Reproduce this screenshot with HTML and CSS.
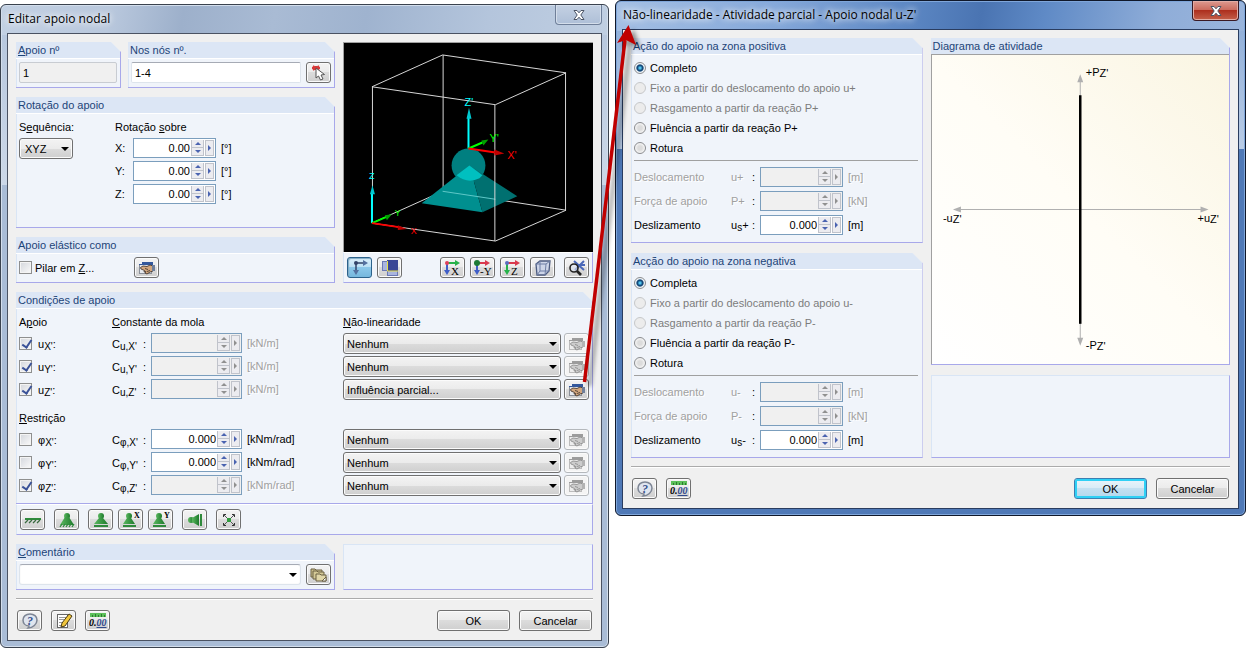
FILE: index.html
```
<!DOCTYPE html>
<html lang="pt">
<head>
  <meta charset="UTF-8" />
  <meta name="viewport" content="width=device-width, initial-scale=1.0"/>
  <title>Editar apoio nodal</title>
  <link rel="stylesheet" href="styles.css">
</head>
<body>
  <!-- Icon set -->
  <svg class="defs" width="0" height="0">
    <defs>
      <linearGradient id="green" x1="0" x2="1"><stop offset="0" stop-color="#5cb860"/><stop offset="1" stop-color="#1d7a2b"/></linearGradient>
      <symbol id="i-edit" viewBox="0 0 18 16">
        <rect x="1.500" y="2.500" width="12" height="11" fill="#e6e9ee" stroke="#8a8f98"/>
        <rect x="1" y="2" width="14" height="3" fill="#34589c"/>
        <rect x="1" y="2" width="3" height="2" fill="#f0f2f6"/>
        <path d="M2.500 7.500L5 6l4 .5L12 5l3 1v5l-3 1-3 2-2-1 1-1.500-2 .5.500-1.500L3 9z" fill="#d3a77e" stroke="#4a3a30" stroke-width=".9"/>
        <path d="M7 8.500l3 1M9 11.500l3-1" stroke="#4a3a30" stroke-width=".9"/>
        <path d="M14 5h3v6h-3z" fill="#6f7f9a"/>
      </symbol>
      <symbol id="i-pick" viewBox="0 0 18 16">
        <path d="M2 3h8M3 1l6 4M9 1L3 5M6 1v4" stroke="#d83a3a" stroke-width="1.800"/>
        <path d="M6 3v10l2.500-2 2 4 2.500-1-2-4 3.500-.5z" fill="#fff" stroke="#555"/>
      </symbol>
      <symbol id="i-axes" viewBox="0 0 18 16">
        <path d="M5 3h9M5 3v9" stroke="#33446a" stroke-width="1.500" fill="none"/>
        <path d="M12 0l5 3-5 3zM2 10l3 5 3-5z" fill="#54709f"/><circle cx="5" cy="3" r="2" fill="#33446a"/>
      </symbol>
      <symbol id="i-layers" viewBox="0 0 18 16">
        <rect x="1.500" y="1.500" width="9" height="9" fill="#a9b5df" stroke="#6b79b5"/>
        <rect x="6.500" y="10.500" width="10" height="5" fill="#a9b5df" stroke="#6b79b5"/>
        <rect x="6" y="0" width="11" height="11" fill="#3a4796"/>
        <path d="M6.500 1v10H17" stroke="#e6e04a" fill="none"/>
      </symbol>
      <symbol id="i-view-x" viewBox="0 0 18 16">
        <path d="M3 3h10" stroke="#27b24a" stroke-width="2"/><path d="M11 0l5 3-5 3z" fill="#27b24a"/>
        <path d="M3 3v9" stroke="#3f5ec8" stroke-width="2"/><path d="M0 10l3 5 3-5z" fill="#3f5ec8"/>
        <circle cx="3" cy="3" r="2" fill="#e0405a"/>
        <text class="icon-letter" x="7" y="15">X</text>
      </symbol>
      <symbol id="i-view-y" viewBox="0 0 18 16">
        <path d="M3 3h10" stroke="#d93a4e" stroke-width="2"/><path d="M11 0l5 3-5 3z" fill="#d93a4e"/>
        <path d="M3 3v9" stroke="#3f5ec8" stroke-width="2"/><path d="M0 10l3 5 3-5z" fill="#3f5ec8"/>
        <circle cx="3" cy="3" r="3" fill="#1c7a34"/>
        <text class="icon-letter" x="6" y="15">-Y</text>
      </symbol>
      <symbol id="i-view-z" viewBox="0 0 18 16">
        <path d="M3 3h10" stroke="#d93a4e" stroke-width="2"/><path d="M11 0l5 3-5 3z" fill="#d93a4e"/>
        <path d="M3 3v9" stroke="#27b24a" stroke-width="2"/><path d="M0 10l3 5 3-5z" fill="#27b24a"/>
        <circle cx="3" cy="3" r="2" fill="#5a6cc0"/>
        <text class="icon-letter" x="7" y="15">Z</text>
      </symbol>
      <symbol id="i-cube" viewBox="0 0 18 16">
        <path d="M2 4l4-3h10l-1 10-4 4H3z" fill="#cdd5e8" stroke="#4c5b80" stroke-width="1.300"/>
        <path d="M2 4h10l-1 11M12 4l4-3M6 1v10h9M6 11l-3 4" fill="none" stroke="#6f7fa6"/>
      </symbol>
      <symbol id="i-zoom" viewBox="0 0 18 16">
        <path d="M6 1l10 9M16 1L7 10M8 5h9" stroke="#4a68b8" stroke-width="2"/>
        <circle cx="6" cy="8" r="4" fill="#dfe6f2" fill-opacity=".6" stroke="#222" stroke-width="1.600"/>
        <path d="M9 11l4 4" stroke="#222" stroke-width="2.600"/>
      </symbol>
      <symbol id="i-fixed" viewBox="0 0 18 16">
        <rect x="1" y="6" width="16" height="2" fill="#2f8a3c"/>
        <path d="M1 11l3-3M5 11l3-3M9 11l3-3M13 11l3-3" stroke="#3a6b40" stroke-width="1.300"/>
      </symbol>
      <symbol id="i-hinge" viewBox="0 0 18 16">
        <circle cx="9" cy="4" r="3" fill="url(#green)"/><path d="M7 5h4l5 8H2z" fill="url(#green)"/>
        <path d="M2 15l2-3M5 15l2-3M8 15l2-3M11 15l2-3M14 15l2-3" stroke="#2f8a3c" stroke-width="1.300"/>
      </symbol>
      <symbol id="i-slide" viewBox="0 0 18 16">
        <circle cx="9" cy="4" r="3" fill="url(#green)"/><path d="M7 6h4l5 6H2z" fill="url(#green)"/>
        <rect x="2" y="13" width="14" height="2" fill="#2f8a3c"/>
      </symbol>
      <symbol id="i-slide-x" viewBox="0 0 18 16">
        <circle cx="7" cy="4" r="3" fill="url(#green)"/><path d="M5 6h4l4 6H1z" fill="url(#green)"/>
        <rect x="1" y="13" width="13" height="2" fill="#2f8a3c"/>
        <text class="icon-tag" x="12" y="6">X</text>
      </symbol>
      <symbol id="i-slide-y" viewBox="0 0 18 16">
        <circle cx="7" cy="4" r="3" fill="url(#green)"/><path d="M5 6h4l4 6H1z" fill="url(#green)"/>
        <rect x="1" y="13" width="13" height="2" fill="#2f8a3c"/>
        <text class="icon-tag" x="12" y="6">Y</text>
      </symbol>
      <symbol id="i-side" viewBox="0 0 18 16">
        <circle cx="5" cy="8" r="3" fill="url(#green)"/><path d="M6 6l7-4v12l-7-4z" fill="url(#green)"/>
        <rect x="14" y="2" width="2" height="12" fill="#2f8a3c"/>
      </symbol>
      <symbol id="i-free" viewBox="0 0 18 16">
        <path d="M4 3l10 10M14 3L4 13" stroke="#555"/>
        <path d="M3.500 5V2.500H6M12 2.500h2.500V5M14.500 11v2.500H12M6 13.500H3.500V11" fill="none" stroke="#333"/>
        <rect x="7" y="6" width="4" height="4" fill="#2f9a3c"/>
      </symbol>
      <symbol id="i-folders" viewBox="0 0 18 16">
        <path d="M1 2h4l1 1h6v7H1z" fill="#c9bd8b" stroke="#6b6142"/>
        <path d="M3 4h4l1 1h6v7H3z" fill="#d4c996" stroke="#6b6142"/>
        <path d="M6 7h4l1 1h5v6H6z" fill="#e0d6a8" stroke="#6b6142"/>
        <path d="M12 14l4-4v4z" fill="#fff" stroke="#6b6142"/>
      </symbol>
      <symbol id="i-help" viewBox="0 0 18 16">
        <path d="M9 1c4 0 7 2.500 7 6 0 4-4 8-9 8 1-1 1-2 1-2-4 0-6-3-6-6 0-3.500 3-6 7-6z" fill="#dfe5ef" stroke="#7d8594" stroke-width="1.500"/>
        <text class="icon-help" x="6" y="12">?</text>
      </symbol>
      <symbol id="i-note" viewBox="0 0 18 16">
        <rect x="2.500" y="1.500" width="10" height="13" fill="#fff" stroke="#666"/>
        <path d="M4 4.500h7M4 6.500h5M4 9.500h4M4 12.500h6" stroke="#999"/>
        <path d="M14 1l3 2-7 10-4 1 1-4z" fill="#f0c63c" stroke="#4a3a10"/>
      </symbol>
      <symbol id="i-units" viewBox="0 0 18 16">
        <rect x="1" y="0" width="16" height="4" fill="#5cc05a"/>
        <path d="M3.500 2v2M6.500 1v3M9.500 2v2M12.500 1v3M15.500 2v2" stroke="#2d7a2f"/>
        <text class="icon-num" x="0" y="13">0.<tspan fill="#2f4a8c" text-decoration="underline">00</tspan></text>
      </symbol>
      <symbol id="i-close" viewBox="0 0 14 12">
        <path d="M2 1.500h3l2 2.300 2-2.300h3L8.800 6l3.200 4.500H9L7 8.200 5 10.500H2L5.200 6z" fill="#fff" stroke="#4c5566"/>
      </symbol>
    </defs>
  </svg>

  <div class="desktop">
    <!-- Nodal support window -->
    <section class="window window-support">
      <header class="title-bar">
        <h1>Editar apoio nodal</h1>
        <button class="close-btn" aria-label="Fechar"><svg><use href="#i-close"/></svg></button>
      </header>
      <div class="client">
        <div class="top-grid">
          <div class="column">
            <div class="ids">
              <div class="panel">
                <h2><label for="supportNo"><u>A</u>poio nº</label></h2>
                <div class="panel-body"><input class="text-box" id="supportNo" type="text" value="1" readonly></div>
              </div>
              <div class="panel">
                <h2><label for="nodes">Nos nós nº.</label></h2>
                <div class="panel-body bar">
                  <input class="text-box" id="nodes" type="text" value="1-4">
                  <button class="icon-btn" aria-label="Selecionar"><svg><use href="#i-pick"/></svg></button>
                </div>
              </div>
            </div>

            <div class="panel">
              <h2>Rotação do apoio</h2>
              <div class="panel-body rotation">
                <div class="stack">
                  <label for="sequence">S<u>e</u>quência:</label>
                  <div class="combo combo-seq"><select id="sequence"><option>XYZ</option></select></div>
                </div>
                <div class="stack">
                  <p>Rotação <u>s</u>obre</p>
                  <div class="rot-rows">
                    <div class="rot-row"><label for="rx">X:</label>
                      <div class="spin"><input id="rx" type="text" value="0.00"><span class="steps"><button class="up"></button><button class="down"></button></span><button class="more"></button></div>
                      <span class="unit">[°]</span></div>
                    <div class="rot-row"><label for="ry">Y:</label>
                      <div class="spin"><input id="ry" type="text" value="0.00"><span class="steps"><button class="up"></button><button class="down"></button></span><button class="more"></button></div>
                      <span class="unit">[°]</span></div>
                    <div class="rot-row"><label for="rz">Z:</label>
                      <div class="spin"><input id="rz" type="text" value="0.00"><span class="steps"><button class="up"></button><button class="down"></button></span><button class="more"></button></div>
                      <span class="unit">[°]</span></div>
                  </div>
                </div>
              </div>
            </div>

            <div class="panel">
              <h2>Apoio elástico como</h2>
              <div class="panel-body elastic">
                <label class="check"><input type="checkbox"><span>Pilar em <u>Z</u>...</span></label>
                <button class="icon-btn" aria-label="Editar pilar"><svg><use href="#i-edit"/></svg></button>
              </div>
            </div>
          </div>

          <div class="preview">
            <svg class="viewport" viewBox="0 0 250 210">
              <g fill="none" stroke="#d8d8d8">
                <path d="M99 149L223 168L152 199L28 181Z"/>
                <path d="M99.500 12V149"/>
              </g>
              <circle cx="125" cy="123" r="17" fill="#007f80"/>
              <path d="M126 123L78 161L139 170Z" fill="#008f8f"/>
              <path d="M126 123L139 170L174 154Z" fill="#007070"/>
              <path d="M126 123L113 133Q124 142 136 136L139 133Z" fill="#00c0c0"/>
              <path d="M99 149L152 157" stroke="#5fc8c8"/>
              <g fill="none" stroke="#d8d8d8">
                <path d="M99 12L223 30L152 62L28 44Z"/>
                <path d="M28.500 44V181M222.500 30V168M151.500 62V199"/>
              </g>
              <g stroke-width="2">
                <path d="M125 106V75" stroke="#0ff"/><path d="M125 106L139 100" stroke="#0f0"/><path d="M125 106L152 110" stroke="#f00"/>
                <path d="M28 181V151" stroke="#0ff"/><path d="M28 181L42 175" stroke="#0f0"/><path d="M28 181L55 185" stroke="#f00"/>
              </g>
              <path d="M123 76L125.500 65L128 76ZM26 152L28.500 143L31 152Z" fill="#00c8d0"/>
              <path d="M138 98L145 97L140 103ZM41 173L48 172L43 178Z" fill="#00a000"/>
              <path d="M151 107L161 111L151 113ZM54 183L63 187L54 188Z" fill="#c00000"/>
              <text class="axis" x="121" y="63" fill="#0ff">Z'</text>
              <text class="axis" x="146" y="99" fill="#0f0">Y'</text>
              <text class="axis" x="164" y="117" fill="#f00">X'</text>
              <text class="axis axis-small" x="25" y="137" fill="#0ff">Z</text>
              <text class="axis axis-small" x="51" y="174" fill="#0f0">Y</text>
              <text class="axis axis-small" x="67" y="192" fill="#f00">X</text>
            </svg>
            <div class="view-bar bar">
              <button class="icon-btn pressed" aria-label="Eixos"><svg><use href="#i-axes"/></svg></button>
              <button class="icon-btn" aria-label="Camadas"><svg><use href="#i-layers"/></svg></button>
              <button class="icon-btn push-right" aria-label="Vista X"><svg><use href="#i-view-x"/></svg></button>
              <button class="icon-btn" aria-label="Vista -Y"><svg><use href="#i-view-y"/></svg></button>
              <button class="icon-btn" aria-label="Vista Z"><svg><use href="#i-view-z"/></svg></button>
              <button class="icon-btn" aria-label="Isometria"><svg><use href="#i-cube"/></svg></button>
              <button class="icon-btn spaced" aria-label="Zoom"><svg><use href="#i-zoom"/></svg></button>
            </div>
          </div>
        </div>

        <div class="panel conditions">
          <h2>Condições de apoio</h2>
          <div class="panel-body">
            <div class="cond-head"><span>A<u>p</u>oio</span><span><u>C</u>onstante da mola</span><span class="nonlin"><u>N</u>ão-linearidade</span></div>
            <div class="cond-rows">
              <div class="cond-row">
                <label class="check"><input type="checkbox" checked><span>u<sub>X'</sub>:</span></label>
                <label class="symbol" for="cux"><span>C<sub>u,X'</sub></span>:</label>
                <div class="spin"><input id="cux" type="text" disabled><span class="steps"><button class="up" disabled></button><button class="down" disabled></button></span><button class="more" disabled></button></div>
                <span class="unit off">[kN/m]</span>
                <div class="combo"><select aria-label="Não-linearidade uX"><option>Nenhum</option></select></div>
                <button class="icon-btn" aria-label="Editar" disabled><svg><use href="#i-edit"/></svg></button>
              </div>
              <div class="cond-row">
                <label class="check"><input type="checkbox" checked><span>u<sub>Y'</sub>:</span></label>
                <label class="symbol" for="cuy"><span>C<sub>u,Y'</sub></span>:</label>
                <div class="spin"><input id="cuy" type="text" disabled><span class="steps"><button class="up" disabled></button><button class="down" disabled></button></span><button class="more" disabled></button></div>
                <span class="unit off">[kN/m]</span>
                <div class="combo"><select aria-label="Não-linearidade uY"><option>Nenhum</option></select></div>
                <button class="icon-btn" aria-label="Editar" disabled><svg><use href="#i-edit"/></svg></button>
              </div>
              <div class="cond-row">
                <label class="check"><input type="checkbox" checked><span>u<sub>Z'</sub>:</span></label>
                <label class="symbol" for="cuz"><span>C<sub>u,Z'</sub></span>:</label>
                <div class="spin"><input id="cuz" type="text" disabled><span class="steps"><button class="up" disabled></button><button class="down" disabled></button></span><button class="more" disabled></button></div>
                <span class="unit off">[kN/m]</span>
                <div class="combo"><select aria-label="Não-linearidade uZ"><option>Influência parcial...</option></select></div>
                <button class="icon-btn" aria-label="Editar"><svg><use href="#i-edit"/></svg></button>
              </div>
            </div>
            <div class="cond-head second"><span><u>R</u>estrição</span></div>
            <div class="cond-rows">
              <div class="cond-row">
                <label class="check"><input type="checkbox"><span>φ<sub>X'</sub>:</span></label>
                <label class="symbol" for="cpx"><span>C<sub>φ,X'</sub></span>:</label>
                <div class="spin"><input id="cpx" type="text" value="0.000"><span class="steps"><button class="up"></button><button class="down"></button></span><button class="more"></button></div>
                <span class="unit">[kNm/rad]</span>
                <div class="combo"><select aria-label="Não-linearidade phi X"><option>Nenhum</option></select></div>
                <button class="icon-btn" aria-label="Editar" disabled><svg><use href="#i-edit"/></svg></button>
              </div>
              <div class="cond-row">
                <label class="check"><input type="checkbox"><span>φ<sub>Y'</sub>:</span></label>
                <label class="symbol" for="cpy"><span>C<sub>φ,Y'</sub></span>:</label>
                <div class="spin"><input id="cpy" type="text" value="0.000"><span class="steps"><button class="up"></button><button class="down"></button></span><button class="more"></button></div>
                <span class="unit">[kNm/rad]</span>
                <div class="combo"><select aria-label="Não-linearidade phi Y"><option>Nenhum</option></select></div>
                <button class="icon-btn" aria-label="Editar" disabled><svg><use href="#i-edit"/></svg></button>
              </div>
              <div class="cond-row">
                <label class="check"><input type="checkbox" checked><span>φ<sub>Z'</sub>:</span></label>
                <label class="symbol" for="cpz"><span>C<sub>φ,Z'</sub></span>:</label>
                <div class="spin"><input id="cpz" type="text" disabled><span class="steps"><button class="up" disabled></button><button class="down" disabled></button></span><button class="more" disabled></button></div>
                <span class="unit off">[kNm/rad]</span>
                <div class="combo"><select aria-label="Não-linearidade phi Z"><option>Nenhum</option></select></div>
                <button class="icon-btn" aria-label="Editar" disabled><svg><use href="#i-edit"/></svg></button>
              </div>
            </div>
          </div>
        </div>
        <div class="support-bar bar">
          <button class="icon-btn" aria-label="Encastrado"><svg><use href="#i-fixed"/></svg></button>
          <button class="icon-btn spaced" aria-label="Articulado"><svg><use href="#i-hinge"/></svg></button>
          <button class="icon-btn spaced" aria-label="Deslizante"><svg><use href="#i-slide"/></svg></button>
          <button class="icon-btn" aria-label="Deslizante X"><svg><use href="#i-slide-x"/></svg></button>
          <button class="icon-btn" aria-label="Deslizante Y"><svg><use href="#i-slide-y"/></svg></button>
          <button class="icon-btn spaced" aria-label="Lateral"><svg><use href="#i-side"/></svg></button>
          <button class="icon-btn spaced" aria-label="Livre"><svg><use href="#i-free"/></svg></button>
        </div>

        <div class="comment-grid">
          <div class="panel">
            <h2><label for="comment"><u>C</u>omentário</label></h2>
            <div class="panel-body bar">
              <div class="combo combo-plain"><select id="comment"><option></option></select></div>
              <button class="icon-btn" aria-label="Biblioteca"><svg><use href="#i-folders"/></svg></button>
            </div>
          </div>
          <div class="blank"></div>
        </div>

        <footer class="actions">
          <button class="icon-btn" aria-label="Ajuda"><svg><use href="#i-help"/></svg></button>
          <button class="icon-btn" aria-label="Notas"><svg><use href="#i-note"/></svg></button>
          <button class="icon-btn" aria-label="Unidades"><svg><use href="#i-units"/></svg></button>
          <button class="btn push-right">OK</button>
          <button class="btn">Cancelar</button>
        </footer>
      </div>
    </section>

    <!-- Nonlinearity window -->
    <section class="window window-active">
      <header class="title-bar">
        <h1>Não-linearidade - Atividade parcial - Apoio nodal u-Z'</h1>
        <button class="close-btn" aria-label="Fechar"><svg><use href="#i-close"/></svg></button>
      </header>
      <div class="client">
        <div class="activity-grid">
          <div class="column">
            <div class="panel">
              <h2>Ação do apoio na zona positiva</h2>
              <div class="panel-body">
                <div class="radios">
                  <label class="radio"><input type="radio" name="pos" checked>Completo</label>
                  <label class="radio off"><input type="radio" name="pos" disabled>Fixo a partir do deslocamento do apoio u+</label>
                  <label class="radio off"><input type="radio" name="pos" disabled>Rasgamento a partir da reação P+</label>
                  <label class="radio"><input type="radio" name="pos">Fluência a partir da reação P+</label>
                  <label class="radio"><input type="radio" name="pos">Rotura</label>
                </div>
                <div class="values">
                  <div class="value-row"><label class="off" for="pu">Deslocamento</label><span class="sym off">u+</span><span>:</span>
                    <div class="spin"><input id="pu" type="text" disabled><span class="steps"><button class="up" disabled></button><button class="down" disabled></button></span><button class="more" disabled></button></div>
                    <span class="unit off">[m]</span></div>
                  <div class="value-row"><label class="off" for="pp">Força de apoio</label><span class="sym off">P+</span><span>:</span>
                    <div class="spin"><input id="pp" type="text" disabled><span class="steps"><button class="up" disabled></button><button class="down" disabled></button></span><button class="more" disabled></button></div>
                    <span class="unit off">[kN]</span></div>
                  <div class="value-row"><label for="ps">Deslizamento</label><span class="sym">u<sub>s</sub>+</span><span>:</span>
                    <div class="spin"><input id="ps" type="text" value="0.000"><span class="steps"><button class="up"></button><button class="down"></button></span><button class="more"></button></div>
                    <span class="unit">[m]</span></div>
                </div>
              </div>
            </div>
            <div class="panel">
              <h2>Acção do apoio na zona negativa</h2>
              <div class="panel-body">
                <div class="radios">
                  <label class="radio"><input type="radio" name="neg" checked>Completa</label>
                  <label class="radio off"><input type="radio" name="neg" disabled>Fixo a partir do deslocamento do apoio u-</label>
                  <label class="radio off"><input type="radio" name="neg" disabled>Rasgamento a partir da reação P-</label>
                  <label class="radio"><input type="radio" name="neg">Fluência a partir da reação P-</label>
                  <label class="radio"><input type="radio" name="neg">Rotura</label>
                </div>
                <div class="values">
                  <div class="value-row"><label class="off" for="nu">Deslocamento</label><span class="sym off">u-</span><span>:</span>
                    <div class="spin"><input id="nu" type="text" disabled><span class="steps"><button class="up" disabled></button><button class="down" disabled></button></span><button class="more" disabled></button></div>
                    <span class="unit off">[m]</span></div>
                  <div class="value-row"><label class="off" for="np">Força de apoio</label><span class="sym off">P-</span><span>:</span>
                    <div class="spin"><input id="np" type="text" disabled><span class="steps"><button class="up" disabled></button><button class="down" disabled></button></span><button class="more" disabled></button></div>
                    <span class="unit off">[kN]</span></div>
                  <div class="value-row"><label for="ns">Deslizamento</label><span class="sym">u<sub>s</sub>-</span><span>:</span>
                    <div class="spin"><input id="ns" type="text" value="0.000"><span class="steps"><button class="up"></button><button class="down"></button></span><button class="more"></button></div>
                    <span class="unit">[m]</span></div>
                </div>
              </div>
            </div>
          </div>

          <div class="column">
            <div class="panel diagram">
              <h2>Diagrama de atividade</h2>
              <svg class="plot" viewBox="0 0 298 309">
                <g stroke="#b0b0b0" fill="#b0b0b0">
                  <path d="M24 154.500H273M148.500 22V287"/>
                  <path stroke="none" d="M21 154.500l8-3v6zM277 154.500l-8-3v6zM148.500 19l-3 8h6zM148.500 291l-3-8h6z"/>
                </g>
                <path d="M148.500 40V269" stroke="#000" stroke-width="2.500"/>
                <text class="plot-label" x="154" y="21">+P<tspan dy="1">Z'</tspan></text>
                <text class="plot-label" x="11" y="167">-u<tspan dy="1">Z'</tspan></text>
                <text class="plot-label" x="266" y="167">+u<tspan dy="1">Z'</tspan></text>
                <text class="plot-label" x="154" y="294">-P<tspan dy="1">Z'</tspan></text>
              </svg>
            </div>
            <div class="blank"></div>
          </div>
        </div>

        <footer class="actions">
          <button class="icon-btn" aria-label="Ajuda"><svg><use href="#i-help"/></svg></button>
          <button class="icon-btn" aria-label="Unidades"><svg><use href="#i-units"/></svg></button>
          <button class="btn btn-default push-right">OK</button>
          <button class="btn">Cancelar</button>
        </footer>
      </div>
    </section>

    <!-- Arrow linking the edit button to the second window -->
    <svg class="callout" viewBox="0 0 80 380">
      <path d="M14.500 366L55 24" stroke="#c00000" stroke-width="3.500"/>
      <path d="M58.500 9L47 27L56 24L66 29Z" fill="#c00000"/>
    </svg>
  </div>
</body>
</html>
```

FILE: styles.css
```
* {
  box-sizing: border-box;
  margin: 0;
  padding: 0;
}

body {
  background-color: #fff;
  color: #000;
  font-family: "Liberation Sans", Arial, sans-serif;
  font-size: 11px;
  line-height: 14px;
}

input,
select,
button {
  font-family: inherit;
  font-size: 11px;
  color: #000;
}

sub {
  font-size: 10px;
  line-height: 0;
  vertical-align: -2px;
}

.defs {
  position: absolute;
}

.desktop {
  position: relative;
  display: grid;
  grid-template-columns: 609fr 631fr;
  gap: 6px;
  align-items: start;
}

/* Windows */
.window {
  border: 1px solid #3a424e;
  border-radius: 6px;
  padding: 0 6px 6px;
}

.window-support {
  margin-top: 4px;
  background:
    linear-gradient(100deg, #c3d1e3 0, #b9c8dd 18%, #9db0cb 30%, #a9bbd4 45%, #9fb3cf 60%, #b4c5dc 80%, #c0cfe2 100%) top / 100% 30px no-repeat,
    linear-gradient(#b4c5dc, #ccd8e8) top / 100% 180px no-repeat,
    #a9bcd6;
  box-shadow: inset 0 0 0 1px #d3deec;
}

.window-active {
  border-color: #10182a;
  background:
    linear-gradient(100deg, #a5c0e4 0, #86a9da 25%, #5d88c4 46%, #4a74b2 58%, #5f8ac6 68%, #8fadd8 86%, #9ab5dc 100%) top / 100% 30px no-repeat,
    linear-gradient(#8aaad6, #b9cce6) top / 100% 148px no-repeat,
    #4f79b7;
  box-shadow: inset 0 0 0 1px #7fa6da;
}

.title-bar {
  display: flex;
  justify-content: space-between;
  align-items: center;
  height: 28px;
}

.title-bar h1 {
  font-family: "Open Sans", "Segoe UI", sans-serif;
  font-size: 12px;
  font-weight: normal;
  line-height: 16px;
  padding-left: 1px;
  text-shadow: 0 0 6px #fff, 0 0 8px #fff;
}

.close-btn {
  align-self: flex-start;
  display: flex;
  align-items: center;
  justify-content: center;
  width: 47px;
  height: 20px;
  border: 1px solid #6f7f99;
  border-top: 0;
  border-radius: 0 0 4px 4px;
  background: linear-gradient(#c4d1e3, #aebfd7);
  box-shadow: inset 0 0 0 1px #d4deeb;
}

.close-btn svg {
  width: 14px;
  height: 12px;
}

.window-active .close-btn {
  border-color: #3a1a24;
  background: linear-gradient(#dd9a90 0, #cb6a5c 48%, #ad2f1e 50%, #c4604a 100%);
  box-shadow: inset 0 0 0 1px #e2aca4;
}

.client {
  border: 1px solid #4a5262;
  background: #f0f0f0;
  padding: 8px 8px 9px;
}

.window-active .client {
  border-color: #2a3d60;
}

/* Panels */
.column {
  display: flex;
  flex-direction: column;
  gap: 9px;
}

.top-grid,
.comment-grid {
  display: grid;
  grid-template-columns: 319fr 250fr;
  gap: 8px;
  margin-bottom: 9px;
}

.comment-grid {
  margin: 9px 0 0;
}

.ids {
  display: grid;
  grid-template-columns: 105fr 207fr;
  gap: 7px;
}

.panel {
  border: 0 solid #a8a8ea;
  border-width: 0 1px 1px 0;
  background: #f0f4fa;
  box-shadow: inset 1px 0 0 #d9e5f5;
  clip-path: polygon(0 0, calc(100% - 10px) 0, 100% 10px, 100% 100%, 0 100%);
}

.panel h2 {
  height: 17px;
  padding-left: 2px;
  border-bottom: 1px solid #fff;
  background: #dce6f5;
  color: #1c4478;
  font-size: 11px;
  font-weight: normal;
  line-height: 16px;
}

.panel-body {
  padding: 3px 3px 4px;
}

.blank {
  border: 1px solid #d9e5f5;
  border-right-color: #a8a8ea;
  border-bottom-color: #a8a8ea;
  background: #f0f4fa;
}

.bar {
  display: flex;
  align-items: center;
  gap: 5px;
}

/* Controls */
.text-box {
  width: 100%;
  height: 21px;
  padding: 0 3px;
  border: 1px solid #dde4ec;
  border-top-color: #a6abb5;
  border-radius: 2px;
  background: #fff;
}

.text-box:read-only {
  background: #f0f0f0;
  border-color: #c8ccd2;
}

.icon-btn,
.btn {
  flex: none;
  height: 21px;
  border: 1px solid #707070;
  border-radius: 3px;
  background: linear-gradient(#f3f3f3 0, #ebebeb 50%, #dcdcdc 50%, #cfcfcf 100%);
  box-shadow: inset 0 0 0 1px #fbfbfb;
}

.icon-btn {
  display: flex;
  align-items: center;
  justify-content: center;
  width: 25px;
}

.icon-btn svg {
  width: 18px;
  height: 16px;
}

.icon-btn:disabled {
  border-color: #b4b8bc;
  background: #f4f4f4;
}

.icon-btn:disabled svg {
  filter: grayscale(1);
  opacity: 0.55;
}

.icon-btn.pressed {
  border-color: #2c628b;
  background: linear-gradient(#dff1fb 0, #b9dff4 50%, #8cc8ea 50%, #76b7dd 100%);
  box-shadow: inset 1px 1px 1px #7fa9c4;
}

.btn {
  width: 73px;
}

.btn-default {
  border-color: #3c7fb1;
  background: linear-gradient(#eaf5fb 0, #d8ebf6 50%, #c3e0f1 50%, #b3d8ed 100%);
  box-shadow: inset 0 0 0 2px #2fd0f5;
}

.push-right {
  margin-left: auto;
}

.combo {
  position: relative;
  height: 21px;
}

.combo select {
  appearance: none;
  display: block;
  width: 100%;
  height: 21px;
  padding: 0 20px 0 3px;
  border: 1px solid #707070;
  border-radius: 3px;
  background: linear-gradient(#f3f3f3 0, #ebebeb 50%, #dcdcdc 50%, #cfcfcf 100%);
  box-shadow: inset 0 0 0 1px #fbfbfb;
}

.combo::after {
  content: "";
  position: absolute;
  top: 9px;
  right: 4px;
  border: 4px solid transparent;
  border-top-color: #000;
  border-bottom: 0;
  pointer-events: none;
}

.combo-seq {
  width: 54px;
}

.combo-seq select {
  padding: 0 16px 0 5px;
}

.combo-plain {
  flex: 1;
}

.combo-plain select {
  border-color: #dde4ec;
  border-top-color: #a6abb5;
  background: #fff;
}

.spin {
  display: flex;
  height: 20px;
  padding: 1px;
  border: 1px solid #7b9ebd;
  background: #fff;
}

.spin:has(input:disabled) {
  background: #f0f0f0;
}

.spin input {
  flex: 1;
  width: 0;
  border: 0;
  background: transparent;
  text-align: right;
  padding-right: 1px;
}

.steps {
  display: flex;
  flex-direction: column;
  width: 13px;
}

.steps button,
.more {
  display: flex;
  align-items: center;
  justify-content: center;
  border: 1px solid #c0c3cb;
  background: #ececf0;
}

.steps button {
  flex: 1;
  border-top-width: 0;
}

.more {
  width: 9px;
  margin-left: 1px;
}

.steps button::before,
.more::before {
  content: "";
  border: 3px solid transparent;
  color: #4a63b0;
}

.up::before {
  border-top: 0 !important;
  border-bottom-color: currentColor !important;
}

.down::before {
  border-bottom: 0 !important;
  border-top-color: currentColor !important;
}

.more::before {
  border-right: 0 !important;
  border-left-color: currentColor !important;
}

.steps button:disabled::before,
.more:disabled::before {
  color: #909090;
}

.unit {
  padding-left: 5px;
}

.off {
  color: #a0a0a0;
  text-shadow: 1px 1px 0 #fff;
}

/* Tick boxes and radios */
.check,
.radio {
  display: flex;
  align-items: center;
}

.check span {
  padding-left: 3px;
}

.cond-row .check span {
  padding-left: 6px;
}

.check input {
  appearance: none;
  flex: none;
  width: 13px;
  height: 13px;
  border: 1px solid #8e8f8f;
  background: linear-gradient(135deg, #d3d6dc, #fafafa);
  box-shadow: inset 0 0 0 1px #f4f4f4;
}

.check input:checked::before {
  content: "";
  display: block;
  width: 4px;
  height: 8px;
  margin-left: 4px;
  border: solid #3a5298;
  border-width: 0 2px 2px 0;
  transform: rotate(34deg);
}

.radio input {
  appearance: none;
  flex: none;
  width: 12px;
  height: 12px;
  margin-right: 4px;
  border: 1px solid #8a8c8f;
  border-radius: 50%;
  background: radial-gradient(circle, #dcdcdc 0 30%, #f6f6f6 70%);
}

.radio input:checked {
  background: radial-gradient(circle, #4fc3ee 0 12%, #14497a 35% 45%, #f0f4f8 58%);
}

.radio input:disabled {
  border-color: #c6c8ca;
  background: #ececec;
}

.radio.off {
  color: #7c7c7c;
  text-shadow: none;
}

/* Support rotation */
.rotation {
  display: grid;
  grid-template-columns: 96px 1fr;
  padding: 6px 3px 23px;
}

.stack {
  display: flex;
  flex-direction: column;
  gap: 4px;
}

.rot-rows {
  display: flex;
  flex-direction: column;
  gap: 3px;
}

.rot-row {
  display: grid;
  grid-template-columns: 18px 83px 1fr;
  align-items: center;
}

.elastic {
  display: grid;
  grid-template-columns: 115px 25px;
  align-items: center;
}

.preview {
  display: flex;
  flex-direction: column;
}

.viewport {
  width: 100%;
  height: 210px;
  border: 1px solid #a0a0a0;
  border-width: 1px 0 0 1px;
  background: #000;
}

.axis {
  font-size: 11px;
}

.axis-small {
  font-size: 9px;
}

.view-bar,
.support-bar {
  height: 31px;
  padding: 0 3px;
  border: 1px solid #d9e5f5;
  border-top-color: #fff;
  border-right-color: #a8a8ea;
  border-bottom-color: #a8a8ea;
  background: #f0f4fa;
}

.spaced {
  margin-left: 4px;
}

/* Support conditions */
.conditions .panel-body {
  padding: 6px 3px 7px;
}

.cond-head,
.cond-row {
  display: grid;
  grid-template-columns: 93px 39px 91px 101px 1fr 28px;
  align-items: center;
}

.cond-row .spin,
.cond-row .unit {
  align-self: start;
}

.cond-row .unit {
  line-height: 20px;
}

.cond-head {
  margin-bottom: 4px;
}

.cond-head span:nth-child(2) {
  grid-column: 2 / 5;
}

.nonlin {
  grid-column: 5;
}

.second {
  margin-top: 11px;
}

.cond-rows {
  display: grid;
  gap: 2px;
}

.cond-row .icon-btn {
  justify-self: end;
}

.symbol {
  display: flex;
  justify-content: space-between;
  padding-right: 5px;
}

/* Activity window */
.activity-grid {
  display: grid;
  grid-template-columns: 292fr 300fr;
  gap: 8px;
}

.activity-grid .column {
  gap: 10px;
}

.activity-grid .blank {
  flex: 1;
}

.radio {
  height: 20px;
}

.values {
  display: grid;
  gap: 4px;
  margin: 2px 1px 3px 0;
  padding-top: 6px;
  border-top: 1px solid #a0a0a0;
}

.value-row {
  display: grid;
  grid-template-columns: 97px 21px 8px 83px 1fr;
  align-items: center;
}

.diagram h2 {
  height: 16px;
  border-bottom: 0;
}

.plot {
  display: block;
  width: 100%;
  height: 310px;
  border: 1px solid #a0a0a0;
  border-width: 1px 0 0 1px;
  background: linear-gradient(45deg, #fff 0, #fffdf6 50%, #faf5e2 100%);
}

.plot-label {
  font-size: 11px;
}

.actions {
  display: flex;
  gap: 9px;
  margin-top: 8px;
  padding: 10px 1px 0;
  border-top: 2px groove #fff;
}

/* Icon lettering */
.icon-letter {
  font: 11px "Liberation Serif", serif;
}

.icon-tag {
  font: bold 8px "Liberation Serif", serif;
}

.icon-help {
  font: italic bold 12px "Liberation Serif", serif;
  fill: #34508c;
}

.icon-num {
  font: italic bold 10px "Liberation Serif", serif;
}

.callout {
  position: absolute;
  top: 16px;
  left: 570px;
  width: 80px;
  height: 380px;
  filter: drop-shadow(5px 4px 2px rgba(0, 0, 0, 0.4));
  pointer-events: none;
}
```
